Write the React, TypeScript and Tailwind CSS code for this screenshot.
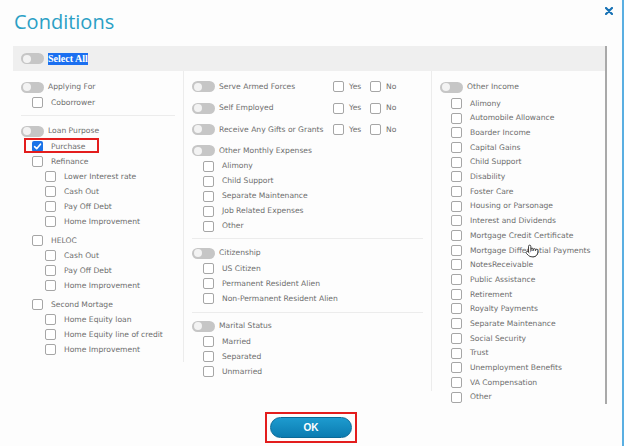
import React from "react";
import { Pointer } from "lucide-react";

const Toggle = () => (
  <div className="w-[23px] h-[11px] rounded-full bg-[#c6c6c6] flex items-center pl-[1.5px] shrink-0">
    <div className="w-[8px] h-[8px] rounded-full bg-[#f3f3f3]" />
  </div>
);

const Box = ({ checked = false }: { checked?: boolean }) =>
  checked ? (
    <div className="w-[11px] h-[11px] rounded-[2px] bg-[#1a73e8] flex items-center justify-center shrink-0">
      <svg width="9" height="9" viewBox="0 0 10 10">
        <path d="M1.8 5.2 L4.1 7.5 L8.3 2.4" fill="none" stroke="#fff" strokeWidth="1.8" strokeLinecap="round" strokeLinejoin="round" />
      </svg>
    </div>
  ) : (
    <div className="w-[11px] h-[11px] rounded-[2px] border border-[#a6a6a6] bg-white shrink-0" />
  );

const Header = ({ label, className = "" }: { label: string; className?: string }) => (
  <div className={`h-4 flex items-center gap-1 ${className}`}>
    <Toggle />
    <span>{label}</span>
  </div>
);

const Item = ({
  label,
  level = 1,
  h = "h-[15px]",
  checked = false,
  mark = false,
  className = "",
}: {
  label: string;
  level?: number;
  h?: string;
  checked?: boolean;
  mark?: boolean;
  className?: string;
}) => (
  <div className={`${h} flex items-center relative ${level === 2 ? "ml-[24px]" : "ml-[11px]"} ${className}`}>
    <Box checked={checked} />
    <span className="ml-2 whitespace-nowrap">{label}</span>
    {mark && <div className="absolute left-[-8px] top-[-1px] w-[75px] h-[15px] border-2 border-[#e31d1d]" />}
  </div>
);

const YesNo = ({ label }: { label: string }) => (
  <div className="h-4 flex items-center">
    <div className="w-[141px] flex items-center gap-1">
      <Toggle />
      <span>{label}</span>
    </div>
    <div className="w-[37px] flex items-center">
      <Box />
      <span className="ml-[5px]">Yes</span>
    </div>
    <div className="flex items-center">
      <Box />
      <span className="ml-[5px]">No</span>
    </div>
  </div>
);

const Sep = ({ className }: { className: string }) => <div className={`h-px bg-[#ececec] mr-2 ${className}`} />;

const otherIncome = [
  "Alimony",
  "Automobile Allowance",
  "Boarder Income",
  "Capital Gains",
  "Child Support",
  "Disability",
  "Foster Care",
  "Housing or Parsonage",
  "Interest and Dividends",
  "Mortgage Credit Certificate",
  "Mortgage Differential Payments",
  "NotesReceivable",
  "Public Assistance",
  "Retirement",
  "Royalty Payments",
  "Separate Maintenance",
  "Social Security",
  "Trust",
  "Unemployment Benefits",
  "VA Compensation",
  "Other",
];

export default function App() {
  return (
    <div className="w-[624px] h-[446px] relative overflow-hidden bg-[#fdfdfd] border-r-2 border-[#5aafe2] font-['DejaVu_Sans',sans-serif] text-[7.6px] text-[#6e6e6e]">
      <div className="flex items-start justify-between">
        <div className="pt-3 pl-[14px] leading-5 text-[20px] text-[#2ba0c5] font-['Open_Sans',sans-serif]">Conditions</div>
        <svg className="mt-[7px] mr-[9px]" width="8" height="8" viewBox="0 0 8 8">
          <path d="M1 1 L7 7 M7 1 L1 7" stroke="#1772b5" strokeWidth="2.2" strokeLinecap="round" />
        </svg>
      </div>

      <div className="ml-[13px] w-[594px] mt-[14px] border-r-2 border-[#a9a9a9]">
        <div className="h-[25px] bg-[#efefef] flex items-center pl-2 gap-1">
          <Toggle />
          <span className="bg-[#1b6ff0] text-white font-bold text-[10px] leading-[12px] font-['Liberation_Serif',serif]">
            Select All
          </span>
        </div>

        <div className="flex items-start">
          {/* Column 1 */}
          <div className="w-[171px] pt-2 pb-[5px] pl-2 border-r border-[#ececec]">
            <Header label="Applying For" />
            <Item label="Coborrower" />
            <Sep className="mt-[5px] mb-[7px]" />
            <Header label="Loan Purpose" />
            <Item label="Purchase" checked mark />
            <Item label="Refinance" />
            <Item label="Lower Interest rate" level={2} />
            <Item label="Cash Out" level={2} />
            <Item label="Pay Off Debt" level={2} />
            <Item label="Home Improvement" level={2} />
            <Item label="HELOC" className="mt-[4px]" />
            <Item label="Cash Out" level={2} />
            <Item label="Pay Off Debt" level={2} />
            <Item label="Home Improvement" level={2} />
            <Item label="Second Mortage" className="mt-[4px]" />
            <Item label="Home Equity loan" level={2} />
            <Item label="Home Equity line of credit" level={2} />
            <Item label="Home Improvement" level={2} />
          </div>

          {/* Column 2 */}
          <div className="w-[248px] pt-2 pb-[12px] pl-2 border-r border-[#ececec]">
            <div className="flex flex-col gap-[5.2px]">
              <YesNo label="Serve Armed Forces" />
              <YesNo label="Self Employed" />
              <YesNo label="Receive Any Gifts or Grants" />
              <Header label="Other Monthly Expenses" />
            </div>
            <Item label="Alimony" />
            <Item label="Child Support" />
            <Item label="Separate Maintenance" />
            <Item label="Job Related Expenses" />
            <Item label="Other" />
            <Sep className="mt-[4.5px] mb-[6px]" />
            <Header label="Citizenship" />
            <Item label="US Citizen" />
            <Item label="Permanent Resident Alien" />
            <Item label="Non-Permanent Resident Alien" />
            <Sep className="mt-[5.5px] mb-[5.6px]" />
            <Header label="Marital Status" />
            <Item label="Married" />
            <Item label="Separated" />
            <Item label="Unmarried" />
          </div>

          {/* Column 3 */}
          <div className="w-[173px] pt-2 pl-2">
            <Header label="Other Income" className="mb-[1px]" />
            {otherIncome.map((l, i) => (
              <Item key={i} label={l} h="h-[14.7px]" />
            ))}
          </div>
        </div>
      </div>

      <div className="flex justify-center mt-[8px]">
        <div className="border-2 border-[#e31d1d] p-[3px]">
          <button className="w-[82px] h-[21px] rounded-full bg-linear-to-b from-[#1d9bcf] to-[#0b7cb1] border border-[#0a6a98] text-white text-[10px] font-bold font-['Liberation_Sans',sans-serif] flex items-center justify-center">
            OK
          </button>
        </div>
      </div>

      <Pointer className="absolute left-[525px] top-[244px]" size={14} color="#333" fill="#fff" strokeWidth={1.6} />
    </div>
  );
}
